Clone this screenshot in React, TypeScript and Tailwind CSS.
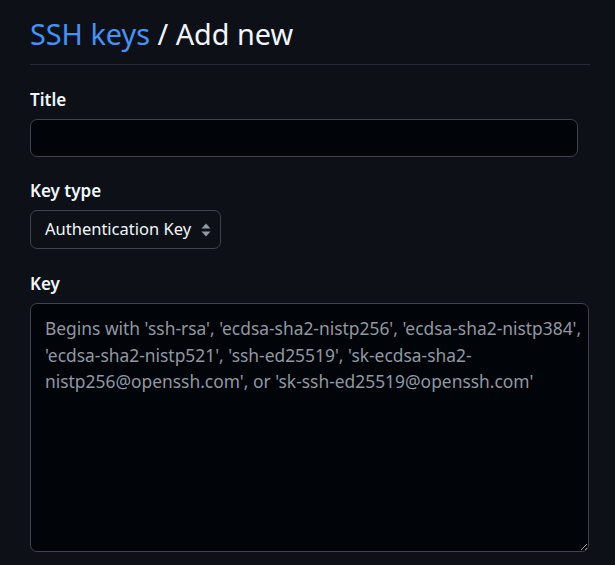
import React from 'react'

const PLACEHOLDER =
  "Begins with 'ssh-rsa', 'ecdsa-sha2-nistp256', 'ecdsa-sha2-nistp384', 'ecdsa-sha2-nistp521', 'ssh-ed25519', 'sk-ecdsa-sha2-nistp256@openssh.com', or 'sk-ssh-ed25519@openssh.com'"

function Label({ children }: { children: React.ReactNode }) {
  return (
    <label className="block text-[17px] leading-[25px] font-semibold text-[#f0f6fc] mb-[7px]">
      {children}
    </label>
  )
}

export default function App() {
  return (
    <div
      className="min-h-[565px] bg-[#0d1117] px-[30px] pt-[12px] overflow-hidden"
      style={{ fontFamily: '"Noto Sans", "Open Sans", sans-serif' }}
    >
      <div className="w-[560px] border-b border-[#262c36] pb-[9px]">
        <h1 className="text-[28.8px] leading-[43px] font-normal text-[#f0f6fc]">
          <a className="text-[#4493f8]">SSH keys</a> / Add new
        </h1>
      </div>

      <div className="mt-[22px]">
        <Label>Title</Label>
        <input
          type="text"
          className="block w-[548px] h-[38px] rounded-[7px] border border-[#3d444d] bg-[#010409] px-[14px] text-[17px] text-[#f0f6fc] outline-none"
        />
      </div>

      <div className="mt-[21px]">
        <Label>Key type</Label>
        <div className="flex items-center w-[191px] h-[39px] rounded-[7px] border border-[#3d444d] bg-[#0d1117] pl-[14px] pr-[9px] text-[16.5px] text-[#f0f6fc]">
          <span className="flex-1 whitespace-nowrap">Authentication Key</span>
          <svg width="10" height="16" viewBox="0 0 10 16">
            <path d="M5 1.5 L9.5 6.5 H0.5 Z" fill="#9198a1" />
            <path d="M5 14.5 L9.5 9.5 H0.5 Z" fill="#9198a1" />
          </svg>
        </div>
      </div>

      <div className="mt-[22px]">
        <Label>Key</Label>
        <textarea
          placeholder={PLACEHOLDER}
          className="block w-[559px] h-[249px] rounded-[7px] border border-[#3d444d] bg-[#010409] pl-[14px] pr-[2px] pt-[11px] text-[17.4px] leading-[26.5px] text-[#f0f6fc] placeholder:text-[#9198a1] outline-none resize-y"
        />
      </div>
    </div>
  )
}
